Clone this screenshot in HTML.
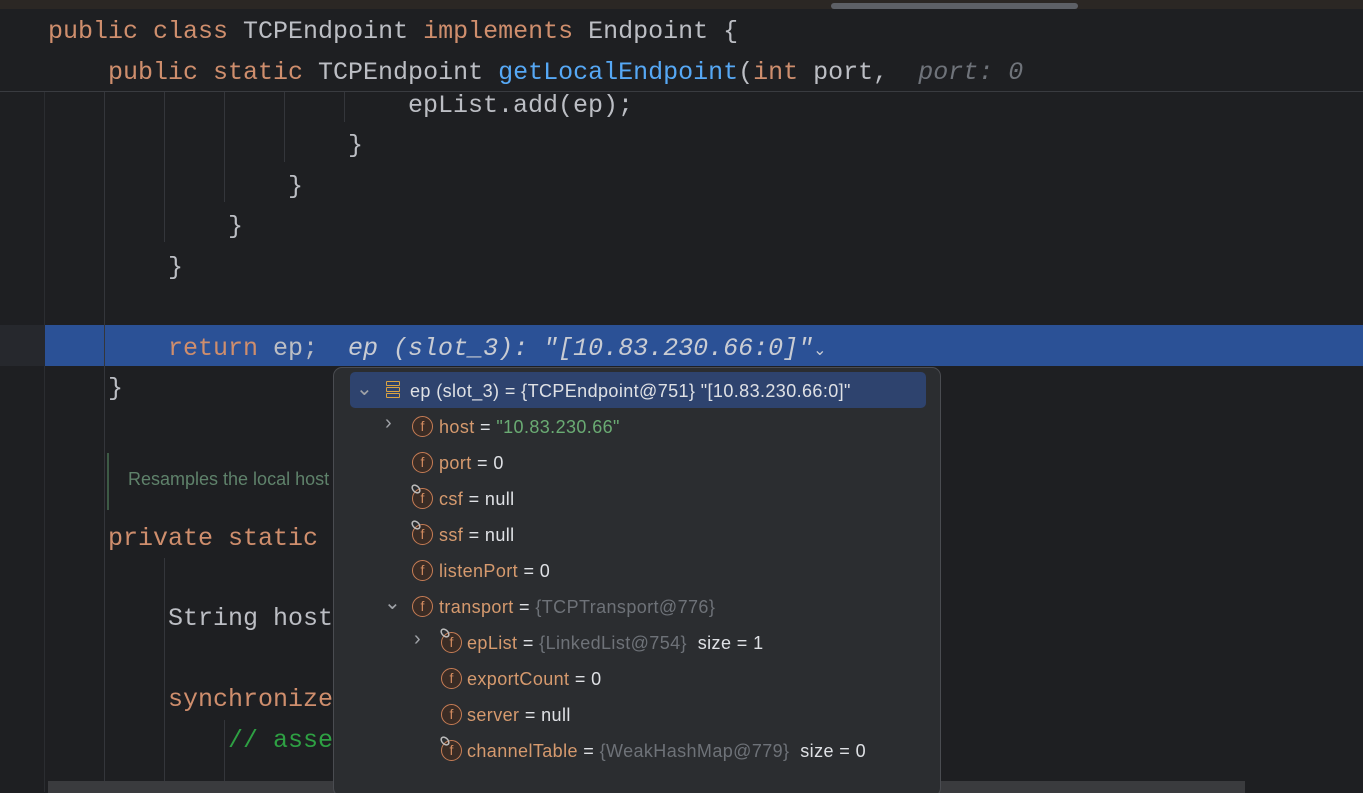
<!DOCTYPE html>
<html><head><meta charset="utf-8"><style>
*{margin:0;padding:0;box-sizing:border-box}
html,body{width:1363px;height:793px;overflow:hidden}
body{background:#1e1f22;position:relative;font-family:"Liberation Mono",monospace}
.top{position:absolute;left:0;top:0;width:1363px;height:9px;background:#2b2724}
.thumb{position:absolute;left:831px;top:3px;width:247px;height:6px;border-radius:3px;background:#5d6066}
.sticky{position:absolute;left:0;top:9px;width:1363px;height:83px;background:#1e1f22;border-bottom:1px solid #393b40;z-index:3}
.l{position:absolute;font-size:25px;line-height:40px;height:40px;color:#bcbec4;white-space:pre}
.k{color:#cf8e6d}.m{color:#56a8f5}.h{color:#6f737a;font-style:italic}
.g{position:absolute;width:1px;background:#34363b}
.hl{position:absolute;left:45px;top:325px;width:1318px;height:41px;background:#2b5196}
.hlg{position:absolute;left:0;top:325px;width:45px;height:41px;background:#26282d}
.pop{position:absolute;left:333px;top:367px;width:608px;height:430px;background:#2b2d30;border:1px solid #4a4c51;border-radius:9px;z-index:5;font-family:"Liberation Sans",sans-serif;font-size:18px;letter-spacing:0.4px;color:#dfe1e5;overflow:hidden}
.r{position:absolute;height:36px;line-height:36px;white-space:pre}
.sel{position:absolute;left:16px;top:4px;width:576px;height:36px;background:#2e436e;border-radius:5px}
.f{position:absolute;width:21px;height:21px;border-radius:50%;border:1.5px solid #c77d55;background:#3a2c25;color:#d08a5f;font-size:14px;line-height:18px;text-align:center;letter-spacing:0}
.n{color:#d69a6e}.gr{color:#6e7278}.s{color:#6aab73}
.ch{position:absolute;color:#a0a3a8;font-size:20px;letter-spacing:0}
.sb{position:absolute;left:48px;top:781px;width:1197px;height:12px;background:#3a3b3e}
</style></head><body>
<div class="top"><div class="thumb"></div></div>
<div class="sticky">
<div class="l" style="left:48px;top:3px"><span class="k">public class </span>TCPEndpoint <span class="k">implements </span>Endpoint {</div>
<div class="l" style="left:108px;top:44px"><span class="k">public static </span>TCPEndpoint <span class="m">getLocalEndpoint</span>(<span class="k">int </span>port,  <span class="h">port: 0</span></div>
</div>
<div class="g" style="left:44px;top:92px;height:700px;background:#2b2d31"></div>
<div class="hlg"></div><div class="hl"></div>
<div class="g" style="left:104px;top:92px;height:690px"></div>
<div class="g" style="left:164px;top:92px;height:150px"></div>
<div class="g" style="left:164px;top:558px;height:224px"></div>
<div class="g" style="left:224px;top:92px;height:110px"></div>
<div class="g" style="left:224px;top:720px;height:62px"></div>
<div class="g" style="left:284px;top:92px;height:70px"></div>
<div class="g" style="left:344px;top:92px;height:30px"></div>
<div class="l" style="left:408px;top:86px">epList.add(ep);</div>
<div class="l" style="left:348px;top:126px">}</div>
<div class="l" style="left:288px;top:167px">}</div>
<div class="l" style="left:228px;top:207px">}</div>
<div class="l" style="left:168px;top:248px">}</div>
<div class="l" style="left:168px;top:329px"><span class="k">return </span>ep;  <span style="color:#c9ccd3;font-style:italic">ep (slot_3): "[10.83.230.66:0]"</span><span style="font-size:16px;color:#c9ccd3">⌄</span></div>
<div class="l" style="left:108px;top:369px">}</div>
<div style="position:absolute;left:107px;top:453px;width:2px;height:57px;background:#3d5a45"></div>
<div style="position:absolute;left:128px;top:469px;font-family:'Liberation Sans',sans-serif;font-size:18px;color:#5f826b">Resamples the local host</div>
<div class="l" style="left:108px;top:519px"><span class="k">private static </span>TCPEndpoint</div>
<div class="l" style="left:168px;top:599px">String host</div>
<div class="l" style="left:168px;top:680px"><span class="k">synchronized</span></div>
<div class="l" style="left:228px;top:721px;color:#2ea043">// assert</div>
<div class="sb"></div>
<div class="pop">
<div class="sel"></div>
<div class="ch" style="left:22px;top:8px">⌄</div>
<div style="position:absolute;left:52px;top:13px;width:14px;height:5px;border:1.5px solid #d9a343;border-radius:1px"></div>
<div style="position:absolute;left:52px;top:19px;width:14px;height:5px;border:1.5px solid #d9a343;border-radius:1px"></div>
<div style="position:absolute;left:52px;top:25px;width:14px;height:5px;border:1.5px solid #d9a343;border-radius:1px"></div>
<div class="r" style="left:76px;top:5px">ep (slot_3) = {TCPEndpoint@751} "[10.83.230.66:0]"</div>

<div class="ch" style="left:51px;top:44px">›</div>
<div class="f" style="left:78px;top:48px">f</div><div class="r" style="left:105px;top:41px"><span class="n">host</span> = <span class="s">"10.83.230.66"</span></div>
<div class="f" style="left:78px;top:84px">f</div><div class="r" style="left:105px;top:77px"><span class="n">port</span> = 0</div>
<div class="f" style="left:78px;top:120px">f</div><div class="r" style="left:105px;top:113px"><span class="n">csf</span> = null</div>
<div class="f" style="left:78px;top:156px">f</div><div class="r" style="left:105px;top:149px"><span class="n">ssf</span> = null</div>
<div class="f" style="left:78px;top:192px">f</div><div class="r" style="left:105px;top:185px"><span class="n">listenPort</span> = 0</div>
<div class="ch" style="left:50px;top:222px">⌄</div>
<div class="f" style="left:78px;top:228px">f</div><div class="r" style="left:105px;top:221px"><span class="n">transport</span> = <span class="gr">{TCPTransport@776}</span></div>
<div class="ch" style="left:80px;top:260px">›</div>
<div class="f" style="left:107px;top:264px">f</div><div class="r" style="left:133px;top:257px"><span class="n">epList</span> = <span class="gr">{LinkedList@754}</span>  size = 1</div>
<div class="f" style="left:107px;top:300px">f</div><div class="r" style="left:133px;top:293px"><span class="n">exportCount</span> = 0</div>
<div class="f" style="left:107px;top:336px">f</div><div class="r" style="left:133px;top:329px"><span class="n">server</span> = null</div>
<div class="f" style="left:107px;top:372px">f</div><div class="r" style="left:133px;top:365px"><span class="n">channelTable</span> = <span class="gr">{WeakHashMap@779}</span>  size = 0</div>
<svg style="position:absolute;left:76px;top:115px" width="13" height="13"><ellipse cx="6" cy="6" rx="4.5" ry="3" transform="rotate(45 6 6)" fill="none" stroke="#bbb" stroke-width="1.5"/></svg>
<svg style="position:absolute;left:76px;top:151px" width="13" height="13"><ellipse cx="6" cy="6" rx="4.5" ry="3" transform="rotate(45 6 6)" fill="none" stroke="#bbb" stroke-width="1.5"/></svg>
<svg style="position:absolute;left:105px;top:259px" width="13" height="13"><ellipse cx="6" cy="6" rx="4.5" ry="3" transform="rotate(45 6 6)" fill="none" stroke="#bbb" stroke-width="1.5"/></svg>
<svg style="position:absolute;left:105px;top:367px" width="13" height="13"><ellipse cx="6" cy="6" rx="4.5" ry="3" transform="rotate(45 6 6)" fill="none" stroke="#bbb" stroke-width="1.5"/></svg>
</div>
</body></html>
